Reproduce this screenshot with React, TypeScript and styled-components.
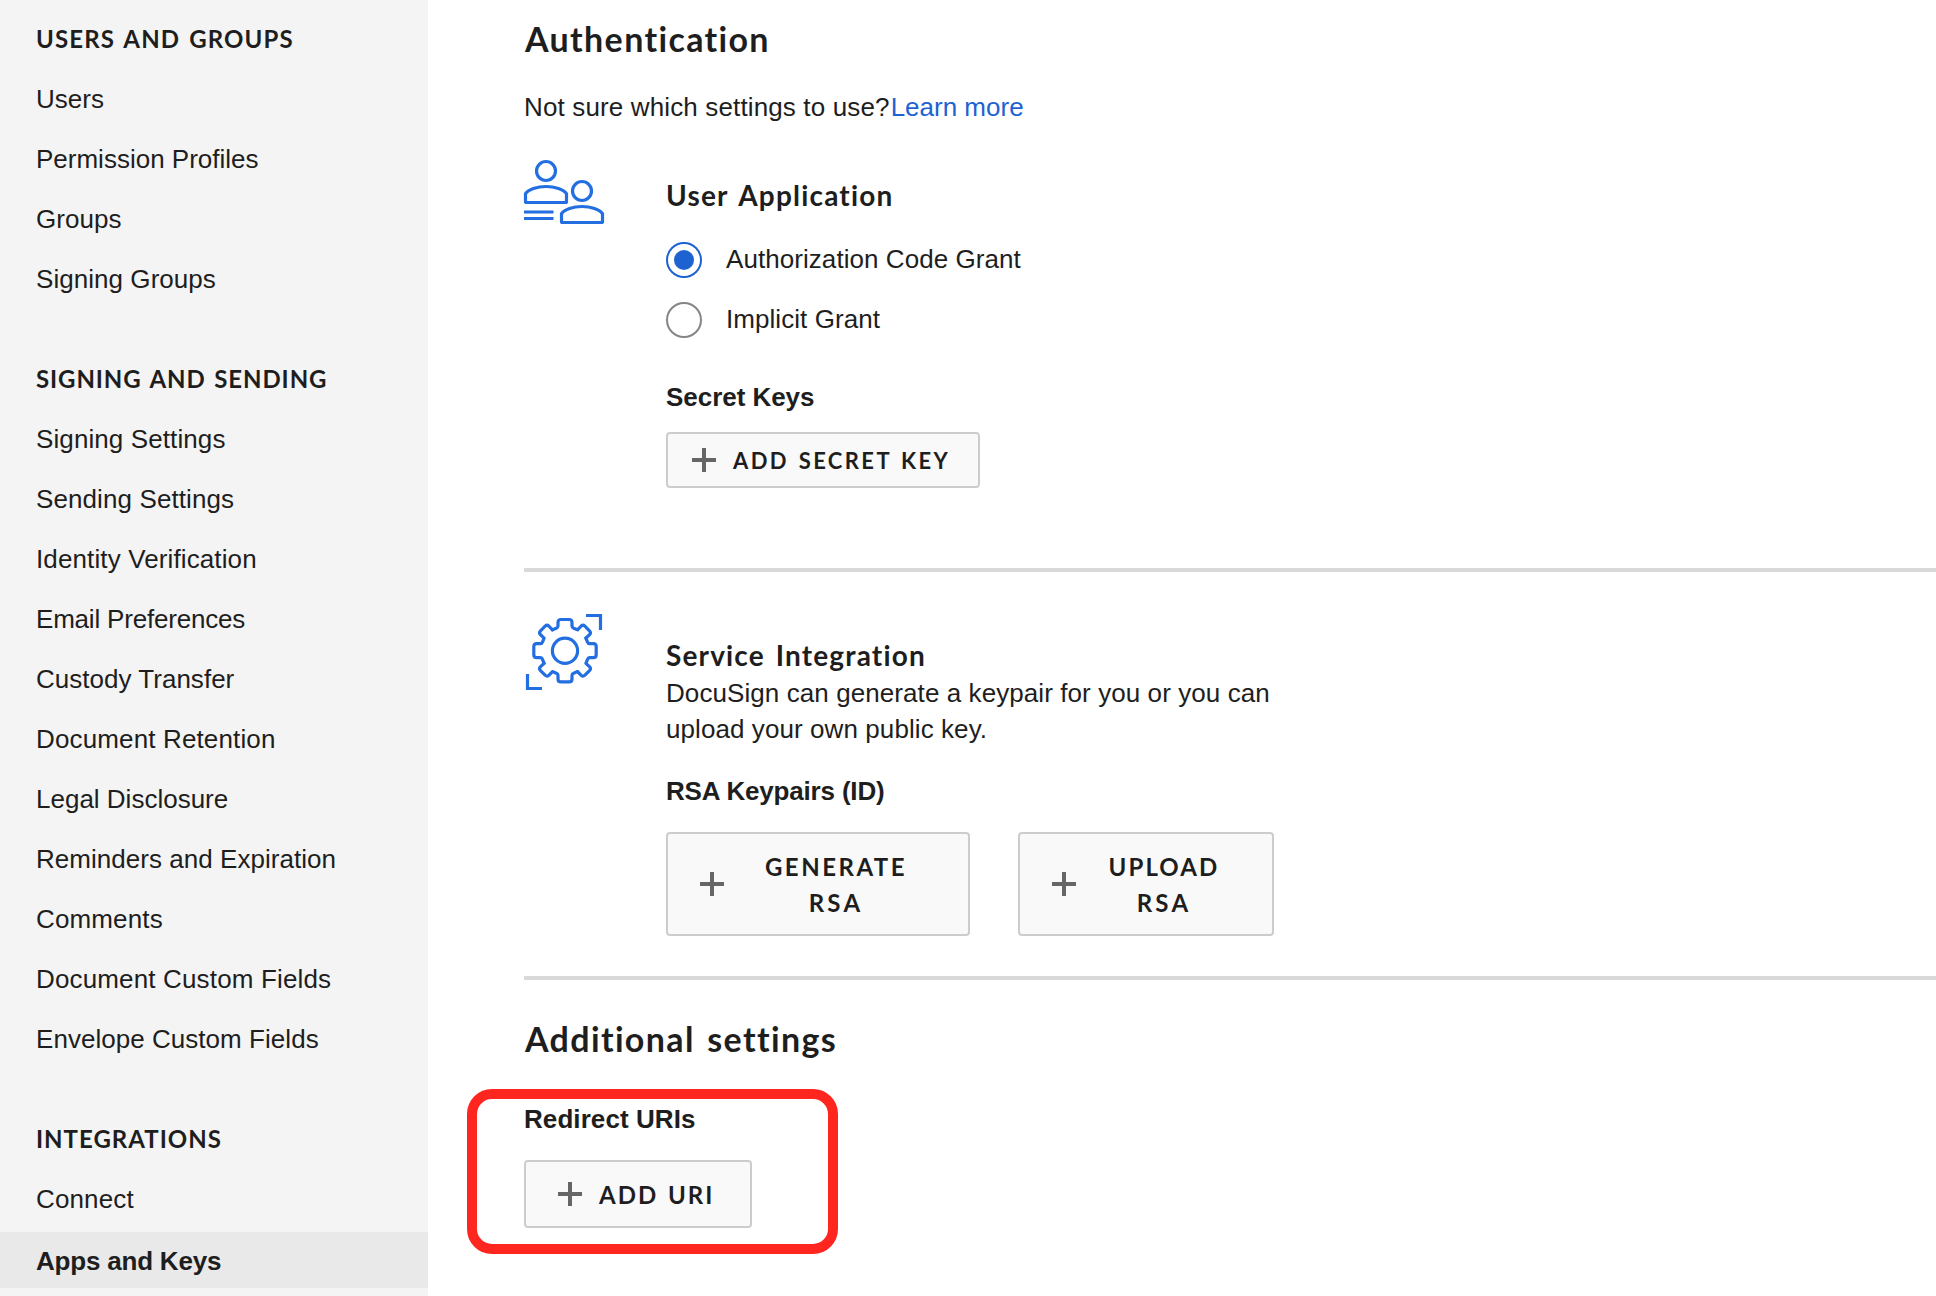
import React from 'react';
import styled, { createGlobalStyle } from 'styled-components';

const bodyFont = '"Liberation Sans", Helvetica, Arial, sans-serif';
const titleFont = 'Lato, "Open Sans", sans-serif';
const ink = '#1e1e1e';
const iconBlue = '#236ee0';
const controlBlue = '#1e62d2';

const GlobalStyle = createGlobalStyle`
  *, *::before, *::after { box-sizing: border-box; }
  body {
    margin: 0;
    background: #fff;
    color: ${ink};
    font-family: ${bodyFont};
    font-size: 26px;
    overflow: hidden;
  }
  h2, h3, h4, p, ul { margin: 0; padding: 0; }
`;

const Page = styled.div`
  display: flex;
  height: 1296px;
  overflow: hidden;
`;

/* Sidebar */

const Sidebar = styled.nav`
  flex: 0 0 428px;
  padding-top: 9px;
  background: #f4f4f4;
`;

const NavGroup = styled.section`
  margin-bottom: 40px;
`;

const NavHeading = styled.h2<{ $track: number }>`
  padding-left: 36px;
  font: 700 24px/60px ${titleFont};
  letter-spacing: ${(p) => p.$track}px;
  word-spacing: 2px;
`;

const NavList = styled.ul`
  list-style: none;
`;

const NavItem = styled.li<{ $track: number; $active?: boolean }>`
  height: ${(p) => (p.$active ? 56 : 60)}px;
  margin-top: ${(p) => (p.$active ? 3 : 0)}px;
  padding-left: 36px;
  line-height: ${(p) => (p.$active ? 58 : 60)}px;
  letter-spacing: ${(p) => p.$track}px;
  font-weight: ${(p) => (p.$active ? 700 : 400)};
  background: ${(p) => (p.$active ? '#e9e9e9' : 'transparent')};
`;

/* Main column */

const Main = styled.main`
  flex: 1;
  min-width: 0;
  padding: 15px 0 0 96px;
`;

const SectionTitle = styled.h2<{ $track: number }>`
  padding-left: 1px;
  font: 700 34px/48px ${titleFont};
  letter-spacing: ${(p) => p.$track}px;
  word-spacing: 3px;
`;

const Hint = styled.p`
  margin-top: 26px;
  line-height: 36px;
  letter-spacing: 0.14px;
`;

const Link = styled.a`
  margin-left: 1px;
  color: ${controlBlue};
  letter-spacing: 0;
`;

const Block = styled.section<{ $top: number }>`
  display: grid;
  grid-template-columns: 142px 1fr;
  margin-top: ${(p) => p.$top}px;
`;

const BlockBody = styled.div<{ $top: number }>`
  padding-top: ${(p) => p.$top}px;
`;

const BlockTitle = styled.h3<{ $track: number }>`
  font: 700 28px/36px ${titleFont};
  letter-spacing: ${(p) => p.$track}px;
  word-spacing: 3px;
`;

const Description = styled.p`
  width: 620px;
  margin-top: 2px;
  line-height: 36px;
  letter-spacing: 0.08px;
`;

const Label = styled.h4<{ $top?: number; $track?: number }>`
  margin-top: ${(p) => p.$top ?? 0}px;
  font-size: 26px;
  line-height: 36px;
  letter-spacing: ${(p) => p.$track ?? 0}px;
`;

const RadioGroup = styled.div`
  display: flex;
  flex-direction: column;
  gap: 24px;
  margin-top: 29px;
`;

const RadioRow = styled.label`
  display: flex;
  gap: 24px;
  height: 36px;
  line-height: 34px;
  letter-spacing: 0.06px;
`;

const RadioMark = styled.span<{ $checked?: boolean }>`
  display: grid;
  place-items: center;
  width: 36px;
  height: 36px;
  border: 2px solid ${(p) => (p.$checked ? controlBlue : '#858585')};
  border-radius: 50%;

  &::after {
    content: '';
    width: 20px;
    height: 20px;
    border-radius: 50%;
    background: ${(p) => (p.$checked ? controlBlue : 'transparent')};
  }
`;

const ButtonRow = styled.div`
  display: flex;
  gap: 48px;
  margin-top: 23px;
`;

const Button = styled.button<{ $width: number; $height: number; $pad: number; $size: number; $track: number }>`
  display: flex;
  align-items: center;
  gap: 16px;
  width: ${(p) => p.$width}px;
  height: ${(p) => p.$height}px;
  padding: 0 0 0 ${(p) => p.$pad}px;
  border: 2px solid #cccccc;
  border-radius: 4px;
  background: #f9f9f9;
  color: ${ink};
  font: 700 ${(p) => p.$size}px/36px ${titleFont};
  letter-spacing: ${(p) => p.$track}px;
  word-spacing: 2px;
`;

const SecretButton = styled(Button)`
  margin-top: 17px;
`;

const UriButton = styled(Button)`
  margin-top: 23px;
`;

const ButtonText = styled.span`
  padding: 1px 0 0 1px;
`;

const StackedText = styled.span`
  display: flex;
  flex: 1;
  flex-direction: column;
  align-items: center;
  padding: 1px 36px 0 0;
`;

const WideLine = styled.span`
  letter-spacing: 3.2px;
`;

const Divider = styled.hr<{ $top: number }>`
  height: 4px;
  margin: ${(p) => p.$top}px 0 0;
  border: 0;
  background: #d9d9d9;
`;

const SettingsTitle = styled(SectionTitle)`
  margin-top: 35px;
`;

const RedirectBlock = styled.section`
  position: relative;
  margin-top: 38px;
`;

const Highlight = styled.div`
  position: absolute;
  top: -12px;
  left: -57px;
  width: 371px;
  height: 165px;
  border: 10px solid #ff2620;
  border-radius: 25px;
  pointer-events: none;
`;

const Icon = styled.svg`
  display: block;
  overflow: visible;
`;

const PlusIcon = () => (
  <Icon width="24" height="24" viewBox="0 0 24 24" fill="#666">
    <path d="M10 0h4v10h10v4H14v10h-4V14H0v-4h10z" />
  </Icon>
);

const UsersIcon = () => (
  <Icon width="80" height="64" viewBox="0 0 80 64" fill="none" stroke={iconBlue} strokeWidth="3.2">
    <circle cx="22" cy="11" r="9.5" />
    <path id="bust" d="M1.5 41.5v-7.8C4.5 29.500 13 26.500 22 26.500s17.500 3 20.500 7.200v7.800q0 1-1 1h-39q-1 0-1-1z" />
    <circle cx="58" cy="31" r="9.5" />
    <use href="#bust" x="36" y="20" />
    <path d="M0 52h29.500M0 58.500h29.500" />
  </Icon>
);

/* A quarter of the gear rim: the upright tooth, then the diagonal one. */
const gearQuarter =
  'M-12.6 -20.9L-8.6 -22.5Q-7 -23 -7 -24.6V-28.3Q-7 -31.2 -4.1 -31.2H4.1Q7 -31.2 7 -28.3V-24.6Q7 -23 8.6 -22.5' +
  'L12.6 -20.9L16.2 -24.7Q18 -26.3 19.9 -24.5L24.5 -19.9Q26.3 -18 24.7 -16.2L20.9 -12.6';

const GearIcon = () => (
  <Icon width="80" height="76" viewBox="0 0 80 76" fill="none" stroke={iconBlue} strokeWidth="3.2">
    <circle cx="41" cy="36.7" r="12.6" />
    <g transform="translate(41 36.7)" strokeLinejoin="round" strokeLinecap="round">
      {[0, 90, 180, 270].map((angle) => (
        <path key={angle} d={gearQuarter} transform={`rotate(${angle})`} />
      ))}
    </g>
    <path d="M62 1.500h14.500V16M3.500 60v14.500H18" />
  </Icon>
);

const groups: { title: string; track: number; items: [string, number][] }[] = [
  {
    title: 'USERS AND GROUPS',
    track: 1.15,
    items: [
      ['Users', 0],
      ['Permission Profiles', 0],
      ['Groups', 0.05],
      ['Signing Groups', 0.05],
    ],
  },
  {
    title: 'SIGNING AND SENDING',
    track: 0.9,
    items: [
      ['Signing Settings', 0.1],
      ['Sending Settings', 0.1],
      ['Identity Verification', 0.12],
      ['Email Preferences', -0.2],
      ['Custody Transfer', 0.02],
      ['Document Retention', 0.14],
      ['Legal Disclosure', 0],
      ['Reminders and Expiration', 0.04],
      ['Comments', 0.14],
      ['Document Custom Fields', 0.15],
      ['Envelope Custom Fields', 0.04],
    ],
  },
  {
    title: 'INTEGRATIONS',
    track: 1,
    items: [
      ['Connect', 0.14],
      ['Apps and Keys', -0.2],
    ],
  },
];

const activeItem = 'Apps and Keys';

export default function App() {
  return (
    <>
      <GlobalStyle />
      <Page>
        <Sidebar>
          {groups.map((group) => (
            <NavGroup key={group.title}>
              <NavHeading $track={group.track}>{group.title}</NavHeading>
              <NavList>
                {group.items.map(([name, track]) => (
                  <NavItem key={name} $track={track} $active={name === activeItem}>
                    {name}
                  </NavItem>
                ))}
              </NavList>
            </NavGroup>
          ))}
        </Sidebar>

        <Main>
          <SectionTitle $track={1.35}>Authentication</SectionTitle>
          <Hint>
            Not sure which settings to use?<Link>Learn more</Link>
          </Hint>

          <Block $top={35}>
            <UsersIcon />
            <BlockBody $top={17}>
              <BlockTitle $track={1.2}>User Application</BlockTitle>
              <RadioGroup>
                <RadioRow>
                  <RadioMark $checked />
                  Authorization Code Grant
                </RadioRow>
                <RadioRow>
                  <RadioMark />
                  Implicit Grant
                </RadioRow>
              </RadioGroup>
              <Label $top={41} $track={-0.04}>Secret Keys</Label>
              <SecretButton $width={314} $height={56} $pad={24} $size={22} $track={2.4}>
                <PlusIcon />
                <ButtonText>ADD SECRET KEY</ButtonText>
              </SecretButton>
            </BlockBody>
          </Block>

          <Divider $top={80} />

          <Block $top={42}>
            <GearIcon />
            <BlockBody $top={23}>
              <BlockTitle $track={1.15}>Service Integration</BlockTitle>
              <Description>DocuSign can generate a keypair for you or you can upload your own public key.</Description>
              <Label $top={26} $track={-0.18}>RSA Keypairs (ID)</Label>
              <ButtonRow>
                <Button $width={304} $height={104} $pad={32} $size={24} $track={2.5}>
                  <PlusIcon />
                  <StackedText>
                    <span>GENERATE</span>
                    <WideLine>RSA</WideLine>
                  </StackedText>
                </Button>
                <Button $width={256} $height={104} $pad={32} $size={24} $track={2.1}>
                  <PlusIcon />
                  <StackedText>
                    <span>UPLOAD</span>
                    <WideLine>RSA</WideLine>
                  </StackedText>
                </Button>
              </ButtonRow>
            </BlockBody>
          </Block>

          <Divider $top={40} />

          <SettingsTitle $track={1.35}>Additional settings</SettingsTitle>
          <RedirectBlock>
            <Label $track={0.08}>Redirect URIs</Label>
            <UriButton $width={228} $height={68} $pad={32} $size={24} $track={2}>
              <PlusIcon />
              <ButtonText>ADD URI</ButtonText>
            </UriButton>
            <Highlight />
          </RedirectBlock>
        </Main>
      </Page>
    </>
  );
}
